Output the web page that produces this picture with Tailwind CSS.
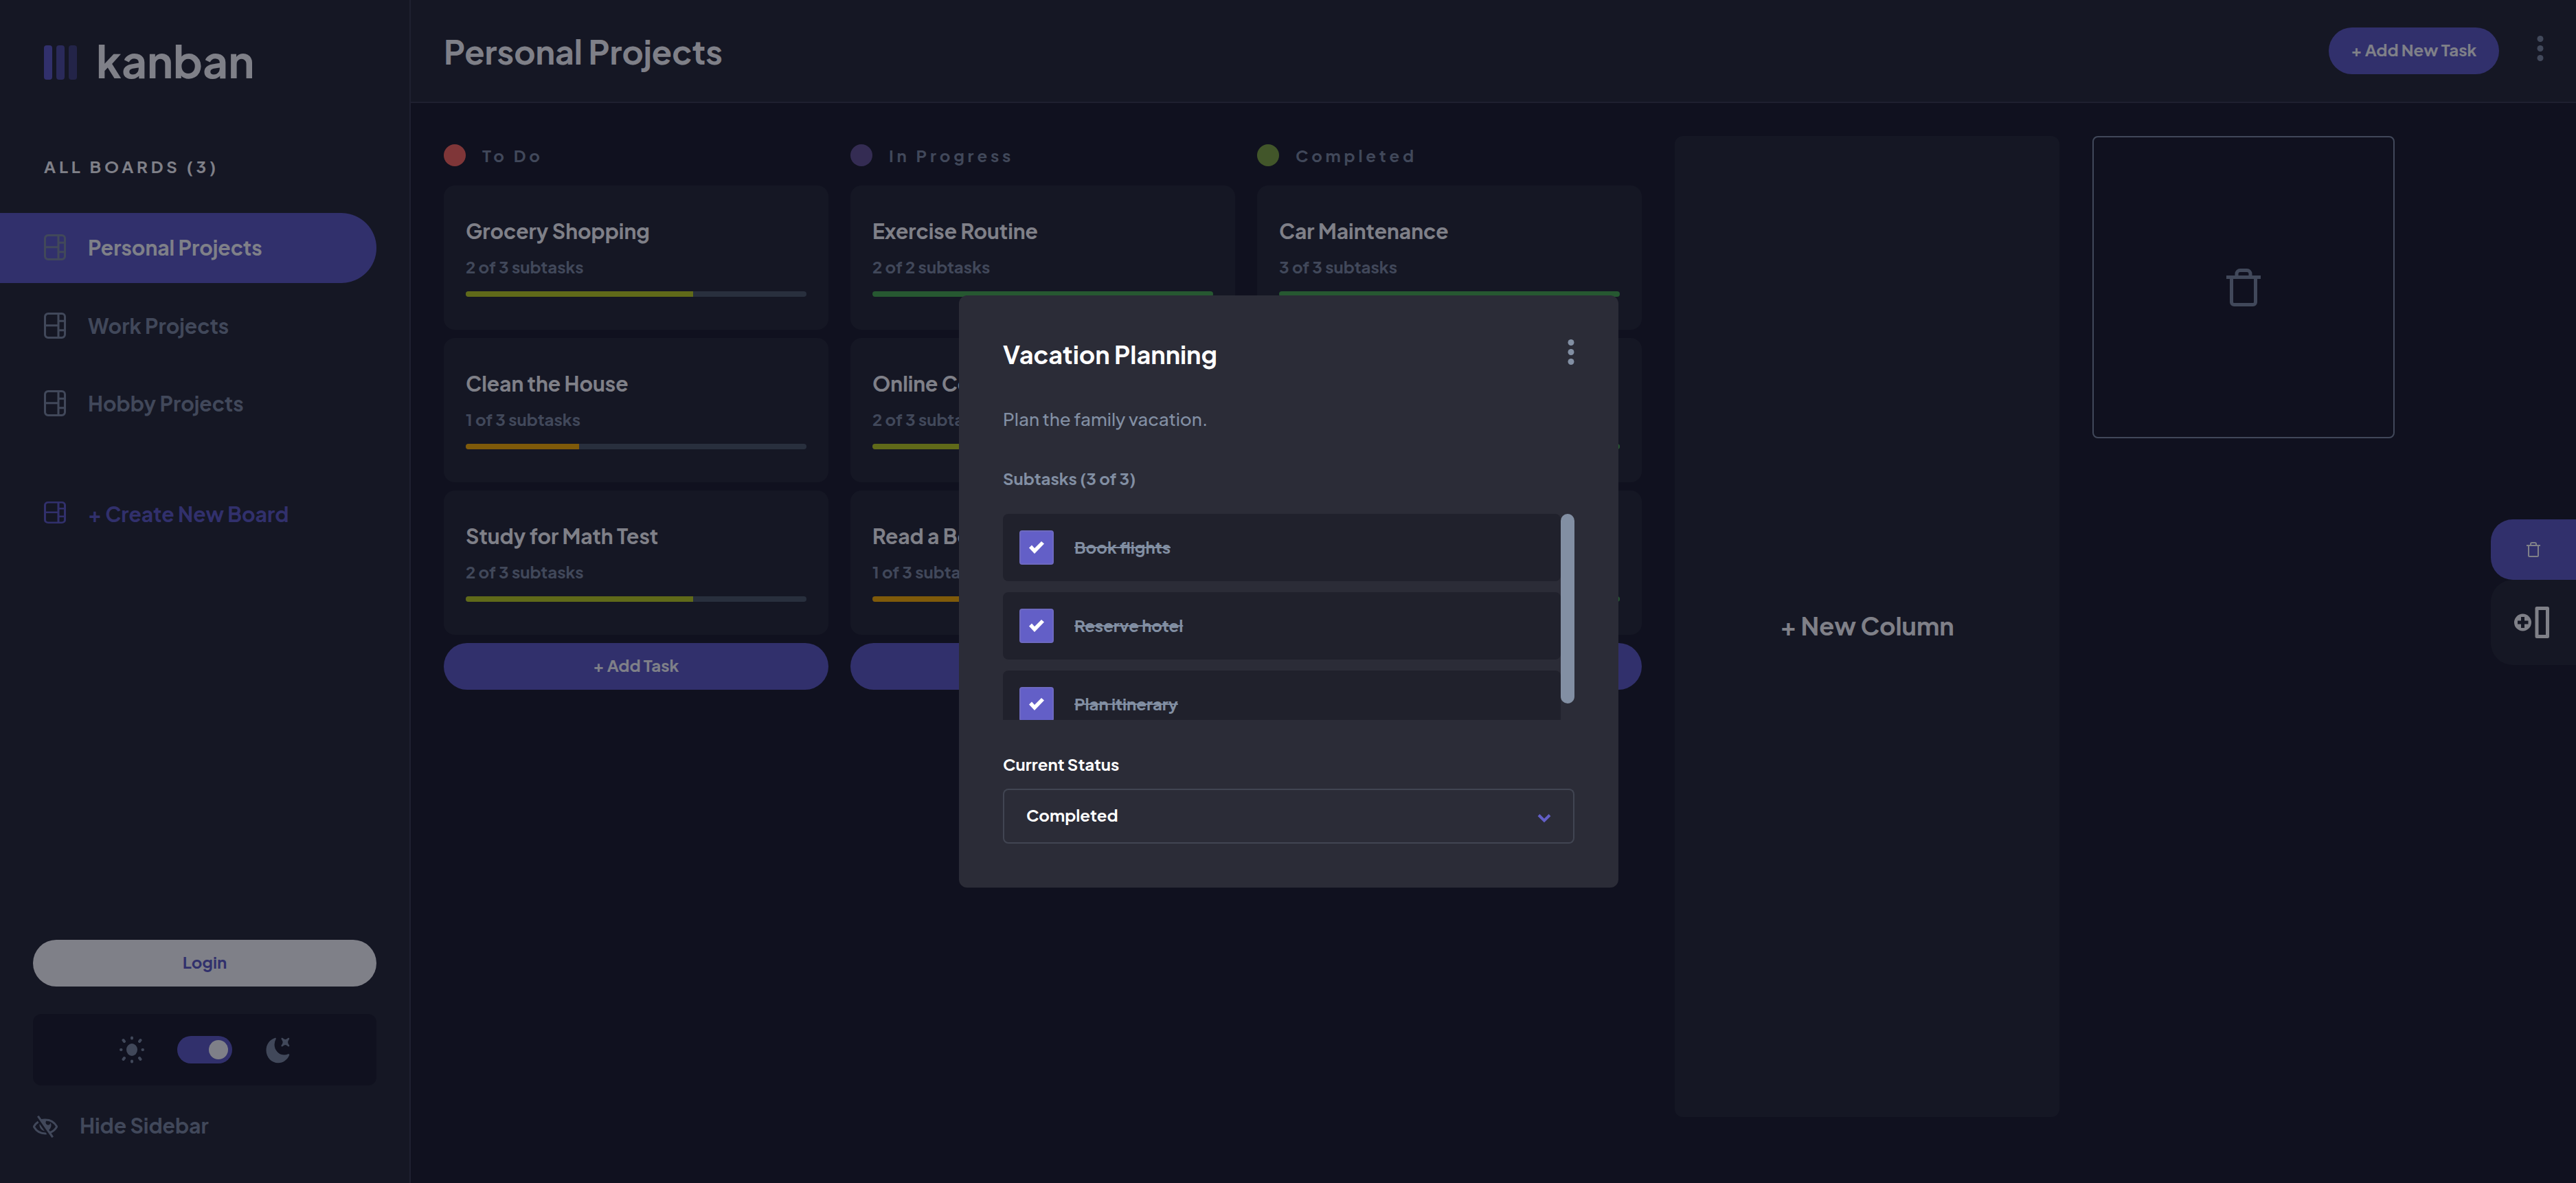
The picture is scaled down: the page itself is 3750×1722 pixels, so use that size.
<!DOCTYPE html>
<html lang="en">
<head>
<meta charset="utf-8">
<meta name="viewport" content="width=device-width, initial-scale=1">
<title>Kanban – Personal Projects</title>
<script src="https://cdn.jsdelivr.net/npm/@tailwindcss/browser@4"></script>
</head>
<body class="bg-[#20212c] font-['Plus_Jakarta_Sans','Inter',sans-serif] text-[24px] leading-8 font-bold text-white">

<!-- Shared icons -->
<svg class="hidden" aria-hidden="true">
  <symbol id="icon-board" viewBox="0 0 32 38" preserveAspectRatio="none">
    <path fill="none" stroke="currentColor" stroke-width="3" d="M6 1.500H26A4.500 4.500 0 0 1 30.500 6V32A4.500 4.500 0 0 1 26 36.500H6A4.500 4.500 0 0 1 1.500 32V6A4.500 4.500 0 0 1 6 1.500ZM21 1.500V36.500M1.500 18.700H21M21 12.200H30.500M21 25.800H30.500"/>
  </symbol>
  <symbol id="icon-trash" viewBox="0 0 20 22">
    <path fill="none" stroke="currentColor" stroke-width="2" d="M0 5H20M6 5V3A2 2 0 0 1 8 1H12A2 2 0 0 1 14 3V5M3 5V19.500A1.500 1.500 0 0 0 4.500 21H15.500A1.500 1.500 0 0 0 17 19.500V5"/>
  </symbol>
  <symbol id="icon-dots" viewBox="0 0 10 37">
    <g fill="currentColor"><circle cx="5" cy="4.500" r="4.500"/><circle cx="5" cy="18.500" r="4.500"/><circle cx="5" cy="32.500" r="4.500"/></g>
  </symbol>
  <symbol id="icon-check" viewBox="0 0 22 18">
    <path fill="#fff" d="M0 9.500 4 5.500 8 10 18 0 22 3.500 8 18Z"/>
  </symbol>
</svg>

<div class="flex min-h-screen">

  <!-- Sidebar -->
  <aside class="flex w-[598px] shrink-0 flex-col border-r-2 border-[#3e3f4e] bg-[#2b2c37] pt-[66px] pb-[62px]">
    <div class="flex h-[50px] items-center gap-7 pl-16">
      <svg class="h-[50px] w-12" viewBox="0 0 48 50" fill="#635fc7" aria-hidden="true">
        <rect width="12" height="50" rx="4"/><rect x="18" width="12" height="50" rx="4" opacity=".75"/><rect x="36" width="12" height="50" rx="4" opacity=".5"/>
      </svg>
      <span class="pb-1.5 text-[64px] leading-none">kanban</span>
    </div>

    <h2 class="mt-[110px] pl-16 tracking-[0.2em]">ALL BOARDS (3)</h2>

    <nav class="mt-[52px] mr-12 flex flex-col gap-[11px] text-[30px] leading-10 text-[#828fa3]">
      <a href="#" class="flex h-[102px] items-center gap-8 rounded-r-full bg-[#635fc7] pb-0.5 pl-16"><svg class="h-[38px] w-8"><use href="#icon-board"/></svg><span class="text-white">Personal Projects</span></a>
      <a href="#" class="flex h-[102px] items-center gap-8 pl-16"><svg class="h-[38px] w-8"><use href="#icon-board"/></svg>Work Projects</a>
      <a href="#" class="flex h-[102px] items-center gap-8 pl-16"><svg class="h-[38px] w-8"><use href="#icon-board"/></svg>Hobby Projects</a>
    </nav>
    <button class="mt-[60px] mr-12 flex h-[102px] items-center gap-8 pb-0.5 pl-16 text-[30px] leading-10 text-[#635fc7]"><svg class="mb-1 h-8 w-8"><use href="#icon-board"/></svg>+ Create New Board</button>

    <div class="mt-auto flex flex-col gap-10 px-12">
      <button class="h-[68px] rounded-full bg-white pb-1 text-[#635fc7]">Login</button>
      <div class="flex h-[104px] items-center justify-center gap-12 rounded-xl bg-[#20212c] text-[#828fa3]">
        <svg class="h-10 w-9" viewBox="0 0 36 40" aria-hidden="true">
          <ellipse cx="18" cy="20" rx="8" ry="9" fill="currentColor"/>
          <path fill="none" stroke="currentColor" stroke-width="4" stroke-linecap="round" d="M18 2.500V3.500M18 36.500V37.500M2 20H2.500M33.500 20H34M5.500 6 7 8M30.500 6 29 8M5.500 34 7 32M30.500 34 29 32"/>
        </svg>
        <input type="checkbox" role="switch" checked aria-label="Dark mode" class="h-10 w-20 appearance-none rounded-full bg-[#635fc7] py-1.5 pl-[46px] before:block before:h-7 before:w-7 before:rounded-full before:bg-white before:content-['']">
        <svg class="h-[39px] w-9" viewBox="0 0 16 16" preserveAspectRatio="none" aria-hidden="true"><path fill="currentColor" d="M6.474.682c.434-.11.718.406.481.78A6.067 6.067 0 0 0 6.01 4.720c0 3.418 2.827 6.187 6.314 6.187.89.002 1.770-.182 2.584-.54.408-.18.894.165.724.57-1.160 2.775-3.944 4.730-7.194 4.730-4.292 0-7.771-3.410-7.771-7.615 0-3.541 2.466-6.518 5.807-7.370Zm8.433.07c.442-.294.969.232.674.674l-.525.787a1.943 1.943 0 0 0 0 2.157l.525.788c.295.441-.232.968-.674.673l-.787-.525a1.943 1.943 0 0 0-2.157 0l-.786.525c-.442.295-.97-.232-.675-.673l.525-.788a1.943 1.943 0 0 0 0-2.157l-.525-.787c-.295-.442.232-.968.674-.673l.787.525a1.943 1.943 0 0 0 2.157 0l.787-.526Z"/></svg>
      </div>
      <button class="flex h-10 items-center gap-8 text-[30px] leading-9 text-[#828fa3]">
        <svg class="h-8 w-9" viewBox="0 0 18 16" aria-hidden="true"><path fill="currentColor" d="M8.522 11.223a4.252 4.252 0 0 1-3.654-5.220l3.654 5.220ZM9 12.250A8.685 8.685 0 0 1 1.500 8a8.612 8.612 0 0 1 2.760-2.864l-.86-1.230A10.112 10.112 0 0 0 .208 7.238a1.500 1.500 0 0 0 0 1.524A10.187 10.187 0 0 0 9 13.750c.414 0 .828-.025 1.239-.074l-1-1.430A8.880 8.880 0 0 1 9 12.250Zm8.792-3.488a10.140 10.140 0 0 1-4.486 4.046l1.504 2.148a.375.375 0 0 1-.092.523l-.648.453a.375.375 0 0 1-.523-.092L3.190 1.044A.375.375 0 0 1 3.282.52L3.930.068a.375.375 0 0 1 .523.092l1.654 2.363A9.780 9.780 0 0 1 9 2.250a10.195 10.195 0 0 1 8.792 4.988 1.500 1.500 0 0 1 0 1.524ZM16.500 8a8.674 8.674 0 0 0-6.755-4.219A1.750 1.750 0 1 0 12.750 5v-.001a4.250 4.250 0 0 1-1.154 5.366l.834 1.192A8.641 8.641 0 0 0 16.500 8Z"/></svg>
        <span class="pb-1">Hide Sidebar</span>
      </button>
    </div>
  </aside>

  <div class="flex min-w-0 flex-1 flex-col">
    <!-- Board header -->
    <header class="flex h-[150px] shrink-0 items-center border-b-2 border-[#3e3f4e] bg-[#2b2c37] pr-[47px] pl-12">
      <h1 class="pt-0.5 text-[48px] leading-[60px]">Personal Projects</h1>
      <button class="ml-auto h-[68px] w-[248px] rounded-full bg-[#635fc7] pb-1">+ Add New Task</button>
      <button aria-label="Board options" class="ml-[55px] pb-2 text-[#828fa3]"><svg class="h-[37px] w-2.5"><use href="#icon-dots"/></svg></button>
    </header>

    <!-- Columns -->
    <main class="flex flex-1 gap-12 overflow-hidden px-12 pt-12 pb-24">
      <div class="flex gap-8">
        <section class="flex w-[560px] shrink-0 flex-col gap-3">
          <h2 class="flex h-[60px] items-center gap-6 pb-1 tracking-[0.2em] text-[#828fa3]"><span class="h-8 w-8 rounded-full bg-[#fe6a5e]"></span>To Do</h2>
          <article class="flex flex-col rounded-2xl bg-[#2b2c37] px-8 pt-[47px] pb-12">
            <h3 class="text-[30px] leading-[38px]">Grocery Shopping</h3>
            <p class="mt-[17px] text-[#828fa3]">2 of 3 subtasks</p>
            <div class="mt-5 h-2 overflow-hidden rounded-full bg-[#505d69]"><div class="h-2 w-2/3 bg-[#c0d320]"></div></div>
          </article>
          <article class="flex flex-col rounded-2xl bg-[#2b2c37] px-8 pt-[47px] pb-12">
            <h3 class="text-[30px] leading-[38px]">Clean the House</h3>
            <p class="mt-[17px] text-[#828fa3]">1 of 3 subtasks</p>
            <div class="mt-5 h-2 overflow-hidden rounded-full bg-[#505d69]"><div class="h-2 w-1/3 bg-[#ffb302]"></div></div>
          </article>
          <article class="flex flex-col rounded-2xl bg-[#2b2c37] px-8 pt-[47px] pb-12">
            <h3 class="text-[30px] leading-[38px]">Study for Math Test</h3>
            <p class="mt-[17px] text-[#828fa3]">2 of 3 subtasks</p>
            <div class="mt-5 h-2 overflow-hidden rounded-full bg-[#505d69]"><div class="h-2 w-2/3 bg-[#c0d320]"></div></div>
          </article>
          <button class="h-[68px] rounded-full bg-[#635fc7] pb-1">+ Add Task</button>
        </section>

        <section class="flex w-[560px] shrink-0 flex-col gap-3">
          <h2 class="flex h-[60px] items-center gap-6 pb-1 tracking-[0.2em] text-[#828fa3]"><span class="h-8 w-8 rounded-full bg-[#685794]"></span>In Progress</h2>
          <article class="flex flex-col rounded-2xl bg-[#2b2c37] px-8 pt-[47px] pb-12">
            <h3 class="text-[30px] leading-[38px]">Exercise Routine</h3>
            <p class="mt-[17px] text-[#828fa3]">2 of 2 subtasks</p>
            <div class="mt-5 h-2 rounded-full bg-[#4caf50]"></div>
          </article>
          <article class="flex flex-col rounded-2xl bg-[#2b2c37] px-8 pt-[47px] pb-12">
            <h3 class="text-[30px] leading-[38px]">Online Course</h3>
            <p class="mt-[17px] text-[#828fa3]">2 of 3 subtasks</p>
            <div class="mt-5 h-2 overflow-hidden rounded-full bg-[#505d69]"><div class="h-2 w-2/3 bg-[#c0d320]"></div></div>
          </article>
          <article class="flex flex-col rounded-2xl bg-[#2b2c37] px-8 pt-[47px] pb-12">
            <h3 class="text-[30px] leading-[38px]">Read a Book</h3>
            <p class="mt-[17px] text-[#828fa3]">1 of 3 subtasks</p>
            <div class="mt-5 h-2 overflow-hidden rounded-full bg-[#505d69]"><div class="h-2 w-1/3 bg-[#ffb302]"></div></div>
          </article>
          <button class="h-[68px] rounded-full bg-[#635fc7] pb-1">+ Add Task</button>
        </section>

        <section class="flex w-[560px] shrink-0 flex-col gap-3">
          <h2 class="flex h-[60px] items-center gap-6 pb-1 tracking-[0.2em] text-[#828fa3]"><span class="h-8 w-8 rounded-full bg-[#84ab42]"></span>Completed</h2>
          <article class="flex flex-col rounded-2xl bg-[#2b2c37] px-8 pt-[47px] pb-12">
            <h3 class="text-[30px] leading-[38px]">Car Maintenance</h3>
            <p class="mt-[17px] text-[#828fa3]">3 of 3 subtasks</p>
            <div class="mt-5 h-2 rounded-full bg-[#4caf50]"></div>
          </article>
          <article class="flex flex-col rounded-2xl bg-[#2b2c37] px-8 pt-[47px] pb-12">
            <h3 class="text-[30px] leading-[38px]">Vacation Planning</h3>
            <p class="mt-[17px] text-[#828fa3]">3 of 3 subtasks</p>
            <div class="mt-5 h-2 rounded-full bg-[#4caf50]"></div>
          </article>
          <article class="flex flex-col rounded-2xl bg-[#2b2c37] px-8 pt-[47px] pb-12">
            <h3 class="text-[30px] leading-[38px]">Home Repairs</h3>
            <p class="mt-[17px] text-[#828fa3]">3 of 3 subtasks</p>
            <div class="mt-5 h-2 rounded-full bg-[#4caf50]"></div>
          </article>
          <button class="h-[68px] rounded-full bg-[#635fc7] pb-1">+ Add Task</button>
        </section>
      </div>

      <button class="w-[560px] shrink-0 rounded-xl bg-[#2b2c37] pb-0.5 text-[36px] leading-[46px]">+ New Column</button>

      <div class="flex h-[440px] w-[440px] shrink-0 items-center justify-center rounded-lg border-2 border-[#828fa3] text-[#828fa3]">
        <svg class="h-[55px] w-[50px]"><use href="#icon-trash"/></svg>
      </div>
    </main>
  </div>
</div>

<!-- Edge controls -->
<div class="fixed inset-y-0 right-0 flex w-[124px] flex-col justify-center pt-0.5">
  <button aria-label="Delete" class="flex h-[88px] items-center rounded-l-[32px] bg-[#635fc7] pl-[52px]"><svg class="h-[22px] w-5"><use href="#icon-trash"/></svg></button>
  <button aria-label="Add column" class="flex h-[124px] items-center rounded-l-[32px] bg-[#2b2c37] pl-[34px]">
    <svg class="h-[46px] w-[51px]" viewBox="0 0 51 46"><path fill="currentColor" fill-rule="evenodd" d="M12.500 10.500a12.500 12.500 0 1 1 0 25 12.500 12.500 0 0 1 0-25ZM10 15v5.500H5v5h5V31h5v-5.500h5.500v-5H15V15ZM33 0H48.500A2.500 2.500 0 0 1 51 2.500V43.500A2.500 2.500 0 0 1 48.500 46H33A2.500 2.500 0 0 1 30.500 43.500V2.500A2.500 2.500 0 0 1 33 0ZM35.500 5V41H46V5Z"/></svg>
  </button>
</div>

<!-- Task dialog -->
<div class="fixed inset-0 flex items-center justify-center bg-[#000112]/50 pl-0.5">
  <div role="dialog" aria-labelledby="task-title" class="w-[960px] rounded-xl bg-[#2b2c37] p-16">
    <div class="flex h-[46px] items-start justify-between">
      <h2 id="task-title" class="text-[36px] leading-[44px]">Vacation Planning</h2>
      <button aria-label="Task options" class="text-[#828fa3]"><svg class="h-[37px] w-2.5"><use href="#icon-dots"/></svg></button>
    </div>
    <p class="mt-12 text-[26px] leading-[44px] font-medium text-[#828fa3]">Plan the family vacation.</p>
    <h3 class="mt-12 text-[#828fa3]">Subtasks (3 of 3)</h3>
    <div class="mt-9 flex h-[300px]">
      <ul class="flex flex-1 flex-col gap-4 overflow-hidden text-[#828fa3]">
        <li><label class="flex h-[98px] items-center gap-[30px] rounded-lg bg-[#20212c] px-6"><span class="relative flex"><input type="checkbox" checked class="h-[50px] w-[50px] appearance-none rounded-sm border-2 border-[#6d69c0] bg-[#635fc7]"><svg class="absolute top-4 left-3.5 h-[18px] w-[22px]"><use href="#icon-check"/></svg></span><span class="pb-0.5 line-through">Book flights</span></label></li>
        <li><label class="flex h-[98px] items-center gap-[30px] rounded-lg bg-[#20212c] px-6"><span class="relative flex"><input type="checkbox" checked class="h-[50px] w-[50px] appearance-none rounded-sm border-2 border-[#6d69c0] bg-[#635fc7]"><svg class="absolute top-4 left-3.5 h-[18px] w-[22px]"><use href="#icon-check"/></svg></span><span class="pb-0.5 line-through">Reserve hotel</span></label></li>
        <li><label class="flex h-[98px] items-center gap-[30px] rounded-lg bg-[#20212c] px-6"><span class="relative flex"><input type="checkbox" checked class="h-[50px] w-[50px] appearance-none rounded-sm border-2 border-[#6d69c0] bg-[#635fc7]"><svg class="absolute top-4 left-3.5 h-[18px] w-[22px]"><use href="#icon-check"/></svg></span><span class="pb-0.5 line-through">Plan itinerary</span></label></li>
      </ul>
      <div class="h-[276px] w-5 rounded-full bg-[#828fa3]"></div>
    </div>
    <label for="status" class="mt-12 block">Current Status</label>
    <div class="relative mt-5">
      <select id="status" class="h-20 w-full appearance-none rounded-lg border-2 border-[#828fa3]/25 bg-[#2b2c37] px-8 pb-1">
        <option>To Do</option><option>In Progress</option><option selected>Completed</option>
      </select>
      <svg class="pointer-events-none absolute top-9 right-[34px] h-3.5 w-5" viewBox="0 0 20 14" aria-hidden="true"><path d="M2 2.500 10 10.500 18 2.500" fill="none" stroke="#635fc7" stroke-width="4"/></svg>
    </div>
  </div>
</div>
</body>
</html>
